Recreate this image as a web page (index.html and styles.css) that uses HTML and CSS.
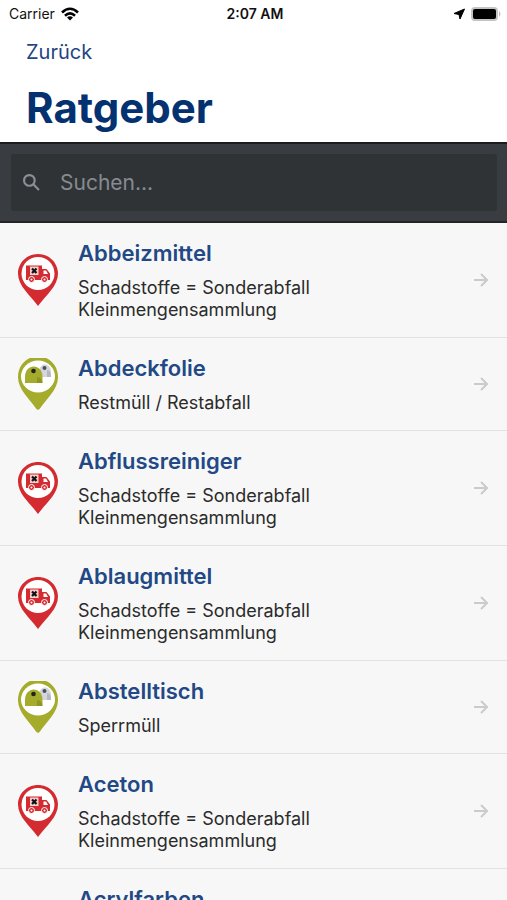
FILE: index.html
```html
<!DOCTYPE html>
<html lang="de">

<head>
  <meta charset="UTF-8">
  <meta name="viewport" content="width=device-width, initial-scale=1.0">
  <title>Ratgeber</title>
  <link rel="stylesheet" href="styles.css">
</head>

<body>

  <!-- shared icons -->
  <svg class="sprite" aria-hidden="true">
    <symbol id="pin-truck" viewBox="0 0 40 52">
      <path fill="#d32b2f" d="M20 0C9 0 0 8.700 0 19.500C0 32 12 41 20 52C28 41 40 32 40 19.500C40 8.700 31 0 20 0Z" />
      <circle cx="20" cy="19.500" r="16.500" fill="#fff" />
      <path fill="#d32b2f" d="M8 11.500h16v3.500h4.500l3.500 4.500V26H8z" />
      <path fill="#fff" d="M25.500 16.500h2.500l2 3.500h-4.500z" />
      <rect x="12" y="12.500" width="8.500" height="8.500" fill="#f3cfcf" />
      <path stroke="#111" stroke-width="2.200" d="M14 14.500l4.500 4.500M18.500 14.500l-4.500 4.500" />
      <g fill="#d32b2f" stroke="#fff" stroke-width="1">
        <circle cx="13.500" cy="25.500" r="3" />
        <circle cx="26.500" cy="25.500" r="3" />
      </g>
      <circle cx="13.500" cy="25.500" r="1" fill="#fff" />
      <circle cx="26.500" cy="25.500" r="1" fill="#fff" />
    </symbol>
    <symbol id="pin-container" viewBox="0 0 40 52">
      <path fill="#a5ab2a" d="M12 0h16C35 3 40 10 40 19C40 32 28 41 22 50.500Q20 53 18 50.500C12 41 0 32 0 19C0 10 5 3 12 0Z" />
      <ellipse cx="20" cy="18.500" rx="17" ry="16" fill="#fff" />
      <path fill="#d3d6dc" d="M21 19v-5c0-10 12-10 12 0v5z" />
      <path fill="#b4b8bf" d="M29 12c3 0 4 3 4 7h-4z" />
      <circle cx="26.500" cy="10" r="2" fill="#4b5058" />
      <path fill="#a5ab2a" d="M7 25v-6c0-14 17.500-14 17.500 0v6z" />
      <path fill="#8f9524" d="M19 19c3 0 5 2 5.500 6H19z" />
      <circle cx="15.500" cy="13" r="2.300" fill="#222" />
    </symbol>
    <symbol id="arrow" viewBox="0 0 14 14">
      <path fill="none" stroke="#cbcbcc" stroke-width="2" d="M0 7h12M7 1l6 6-6 6" />
    </symbol>
  </svg>

  <header class="header">
    <div class="status">
      <div class="status-left">
        <span>Carrier</span>
        <svg class="wifi" viewBox="0 0 18 14" aria-hidden="true">
          <path fill="none" stroke="#000" stroke-width="2.600" d="M1 5.500Q9-2 17 5.500M4 8.800Q9 4 14 8.800" />
          <path d="M9 13.500L6 10.500Q9 8 12 10.500z" />
        </svg>
      </div>
      <strong class="time">2:07 AM</strong>
      <div class="status-right">
        <svg class="location" viewBox="0 0 12 12" aria-hidden="true">
          <path stroke="#000" stroke-linejoin="round" d="M11.500 1L7 11L6 6.500L1 5.500z" />
        </svg>
        <svg class="battery" viewBox="0 0 30 14" aria-hidden="true">
          <rect width="27" height="14" rx="4" fill="#c4c4c4" />
          <rect x="2" y="2" width="23" height="10" rx="2" />
          <path fill="#bdbdbd" d="M28 4q3 3 0 6z" />
        </svg>
      </div>
    </div>
    <a class="back" href="#">Zurück</a>
    <h1>Ratgeber</h1>
  </header>

  <form class="search">
    <label class="search-box" for="search">
      <svg class="search-icon" viewBox="0 0 16 16" aria-hidden="true">
        <g fill="none" stroke="#8b9097" stroke-width="2">
          <circle cx="6" cy="6" r="5" />
          <path d="M9.500 9.500L15 15" />
        </g>
      </svg>
      <input id="search" type="text" placeholder="Suchen..." aria-label="Suchen">
    </label>
  </form>

  <ul class="list">
    <li>
      <a class="item" href="#">
        <svg class="pin"><use href="#pin-truck" /></svg>
        <div class="item-text">
          <h2>Abbeizmittel</h2>
          <p>Schadstoffe = Sonderabfall<br>Kleinmengensammlung</p>
        </div>
        <svg class="arrow"><use href="#arrow" /></svg>
      </a>
    </li>
    <li>
      <a class="item" href="#">
        <svg class="pin"><use href="#pin-container" /></svg>
        <div class="item-text">
          <h2>Abdeckfolie</h2>
          <p>Restmüll / Restabfall</p>
        </div>
        <svg class="arrow"><use href="#arrow" /></svg>
      </a>
    </li>
    <li>
      <a class="item" href="#">
        <svg class="pin"><use href="#pin-truck" /></svg>
        <div class="item-text">
          <h2>Abflussreiniger</h2>
          <p>Schadstoffe = Sonderabfall<br>Kleinmengensammlung</p>
        </div>
        <svg class="arrow"><use href="#arrow" /></svg>
      </a>
    </li>
    <li>
      <a class="item" href="#">
        <svg class="pin"><use href="#pin-truck" /></svg>
        <div class="item-text">
          <h2>Ablaugmittel</h2>
          <p>Schadstoffe = Sonderabfall<br>Kleinmengensammlung</p>
        </div>
        <svg class="arrow"><use href="#arrow" /></svg>
      </a>
    </li>
    <li>
      <a class="item" href="#">
        <svg class="pin"><use href="#pin-container" /></svg>
        <div class="item-text">
          <h2>Abstelltisch</h2>
          <p>Sperrmüll</p>
        </div>
        <svg class="arrow"><use href="#arrow" /></svg>
      </a>
    </li>
    <li>
      <a class="item" href="#">
        <svg class="pin"><use href="#pin-truck" /></svg>
        <div class="item-text">
          <h2>Aceton</h2>
          <p>Schadstoffe = Sonderabfall<br>Kleinmengensammlung</p>
        </div>
        <svg class="arrow"><use href="#arrow" /></svg>
      </a>
    </li>
    <li>
      <a class="item" href="#">
        <div class="pin"></div>
        <div class="item-text">
          <h2>Acrylfarben</h2>
        </div>
      </a>
    </li>
  </ul>

</body>

</html>
```
FILE: styles.css
```css
* {
  box-sizing: border-box;
}

body {
  margin: 0;
  height: 100vh;
  display: flex;
  flex-direction: column;
  overflow: hidden;
  background: #f7f7f7;
  color: #2b2b2b;
  font-family: Inter, "Liberation Sans", sans-serif;
}

svg {
  display: block;
  flex: none;
}

.sprite {
  position: absolute;
  width: 0;
  height: 0;
}

/* header */
.header {
  flex: none;
  background: #fff;
  padding-bottom: 8px;
}

.status {
  display: grid;
  grid-template-columns: 1fr auto 1fr;
  align-items: center;
  height: 27px;
  padding: 0 6px 0 9px;
  color: #111;
  font-size: 14px;
}

.status-left,
.status-right {
  display: flex;
  align-items: center;
  gap: 6px;
}

.status-right {
  justify-content: flex-end;
}

.time {
  font-weight: 600;
}

.wifi {
  width: 18px;
  height: 14px;
}

.location {
  width: 12px;
  height: 12px;
}

.battery {
  width: 30px;
  height: 14px;
}

.back {
  display: block;
  width: fit-content;
  margin-left: 26px;
  padding-top: 13px;
  color: #1f4682;
  font-size: 20px;
  line-height: 24px;
  text-decoration: none;
}

h1 {
  margin: 18px 26px 0;
  color: #04316f;
  font-size: 42px;
  line-height: 52px;
  font-weight: 700;
}

/* search */
.search {
  flex: none;
  padding: 10px 10px 10px 11px;
  background: #393c41;
  border-top: 2px solid #1b1c1e;
  border-bottom: 2px solid #222427;
}

.search-box {
  display: flex;
  align-items: center;
  gap: 20px;
  height: 57px;
  padding: 0 12px;
  border-radius: 3px;
  background: #2f3336;
}

.search-icon {
  width: 17px;
  height: 17px;
}

.search input {
  flex: 1;
  min-width: 0;
  padding: 0;
  border: 0;
  outline: 0;
  background: none;
  color: #fff;
  font: inherit;
  font-size: 21px;
}

.search input::placeholder {
  color: #878b91;
  opacity: 1;
}

/* list */
.list {
  flex: 1;
  min-height: 0;
  margin: 0;
  padding: 0;
  list-style: none;
  overflow-y: auto;
  scrollbar-width: none;
}

.item {
  display: flex;
  align-items: center;
  gap: 20px;
  padding: 16px 19px 16px 18px;
  border-bottom: 1px solid #e2e2e3;
  color: inherit;
  text-decoration: none;
}

.pin {
  flex: none;
  width: 40px;
  height: 52px;
}

.item-text {
  flex: 1;
  align-self: flex-start;
}

.item h2 {
  margin: 0 0 10px;
  color: #224985;
  font-size: 22px;
  line-height: 28px;
  font-weight: 600;
}

.item p {
  margin: 0;
  font-size: 18px;
  line-height: 22px;
}

.arrow {
  width: 14px;
  height: 14px;
}
```
